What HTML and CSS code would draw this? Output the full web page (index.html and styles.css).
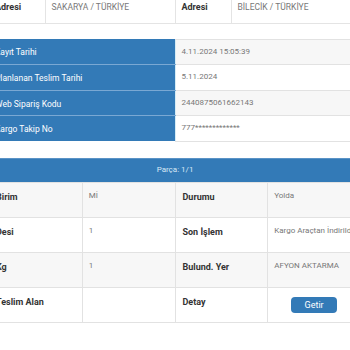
FILE: index.html
```html
<!DOCTYPE html>
<html lang="tr">
<head>
<meta charset="utf-8">
<title>Kargo Takip</title>
<link rel="stylesheet" href="styles.css">
</head>
<body>
<div class="page">
  <table class="addr">
    <colgroup><col class="c-lbl"><col class="c-val"><col class="c-lbl"><col class="c-val"></colgroup>
    <tr>
      <th>Adresi</th><td>SAKARYA / TÜRKİYE</td>
      <th class="split">Adresi</th><td>BİLECİK / TÜRKİYE</td>
    </tr>
  </table>

  <table class="info">
    <tr><th>Kayıt Tarihi</th><td>4.11.2024 15:05:39</td></tr>
    <tr><th>Planlanan Teslim Tarihi</th><td>5.11.2024</td></tr>
    <tr><th>Web Sipariş Kodu</th><td>2440875061662143</td></tr>
    <tr><th>Kargo Takip No</th><td>777*************</td></tr>
  </table>

  <table class="parts">
    <tr><th class="head" colspan="4">Parça: 1/1</th></tr>
    <tr><th>Birim</th><td>Mİ</td><th class="split">Durumu</th><td>Yolda</td></tr>
    <tr><th>Desi</th><td>1</td><th class="split">Son İşlem</th><td class="nowrap">Kargo Araçtan İndirildi</td></tr>
    <tr><th>Kg</th><td>1</td><th class="split">Bulund. Yer</th><td>AFYON AKTARMA</td></tr>
    <tr><th>Teslim Alan</th><td></td><th class="split">Detay</th><td class="btn-cell"><button class="btn">Getir</button></td></tr>
  </table>
</div>
</body>
</html>
```
FILE: styles.css
```css
html, body {
  margin: 0;
  padding: 0;
  background: #fff;
  overflow: hidden;
}
body {
  font-family: Roboto, "Liberation Sans", sans-serif;
  color: #333;
}
.page {
  width: 372px;
  margin-left: -11px;
}
table {
  width: 372px;
  border-collapse: collapse;
  table-layout: fixed;
}
th, td {
  text-align: left;
  vertical-align: top;
  white-space: nowrap;
  overflow: hidden;
}

/* address row */
.addr .c-lbl { width: 56px; }
.addr .c-val { width: 130px; }
.addr th, .addr td {
  height: 23px;
  padding: 1px 6px 0;
  line-height: 12px;
  border-bottom: 1px solid #e4e4e4;
  box-sizing: border-box;
}
.addr th {
  font-size: 9px;
  font-weight: 700;
  color: #333;
}
.addr td {
  font-size: 8.5px;
  color: #777;
  border-left: 1px solid #e4e4e4;
}
.addr th.split { border-left: 1px solid #e4e4e4; }

/* info table */
.info { margin-top: 15px; }
.info th, .info td {
  width: 50%;
  height: 25.5px;
  box-sizing: border-box;
  padding: 0 6px;
  line-height: 24.5px;
  vertical-align: middle;
}
.info th {
  background: #337ab7;
  color: #fff;
  font-size: 8.5px;
  font-weight: 400;
  padding-top: 2px;
  line-height: 22.5px;
  border-bottom: 1px solid #7aa8d3;
}
.info tr:last-child th { border-bottom: none; }
.info td {
  font-size: 8px;
  color: #777;
  border-top: 1px solid #e2e2e2;
  border-bottom: 1px solid #e2e2e2;
  border-left: 1px solid #d6ecf5;
}
.info tr:nth-child(odd) td { background: #f7f7f7; }

/* parts table */
.parts { margin-top: 16px; }
.parts th.head {
  height: 24px;
  box-sizing: border-box;
  background: #337ab7;
  color: #d8e8f6;
  font-size: 8px;
  font-weight: 400;
  text-align: center;
  vertical-align: middle;
  border-top: 1px solid #5a93c6;
  padding: 0;
}
.parts th, .parts td {
  height: 35px;
  box-sizing: border-box;
  padding: 8px 6px 0;
  line-height: 12px;
  border: 1px solid #e2e2e2;
}
.parts th {
  font-size: 9px;
  font-weight: 700;
  color: #333;
}
.parts td {
  font-size: 8px;
  color: #777;
  padding-top: 7px;
}
.parts tr:nth-child(even) th,
.parts tr:nth-child(even) td { background: #f7f7f7; }
.parts th.split { padding-left: 7px; }
.parts td.btn-cell {
  text-align: center;
  padding-top: 9px;
}
.btn {
  width: 46px;
  height: 16px;
  border: none;
  border-radius: 4px;
  background: #337ab7;
  color: #fff;
  font-family: Roboto, "Liberation Sans", sans-serif;
  font-size: 9px;
  padding: 0;
  line-height: 16px;
}
```
